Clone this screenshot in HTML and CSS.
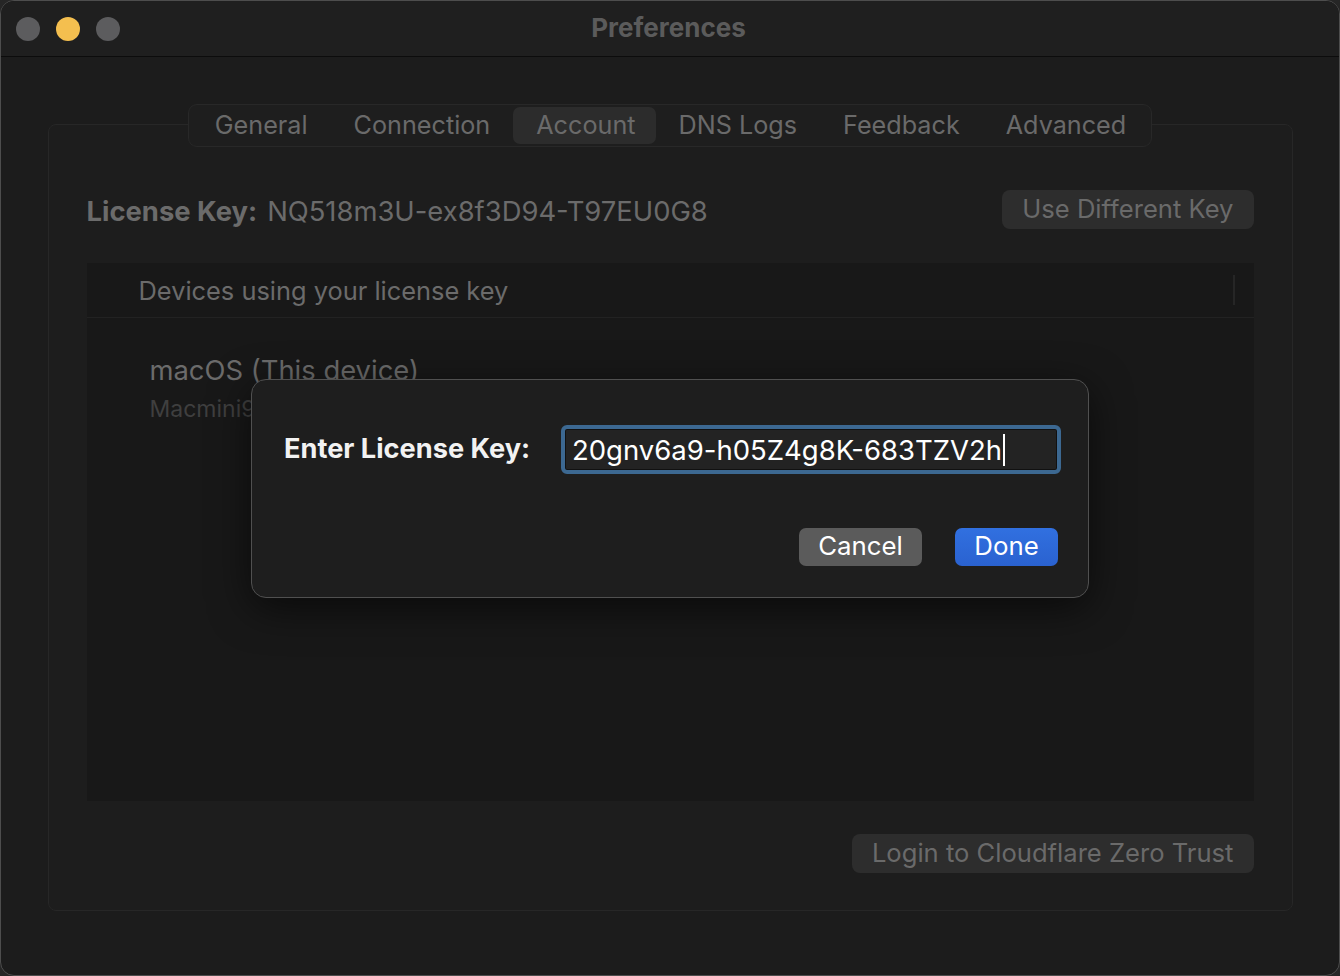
FILE: index.html
```html
<!DOCTYPE html>
<html lang="en">
<head>
<meta charset="utf-8">
<title>Preferences</title>
<link rel="stylesheet" href="styles.css">
</head>
<body>
<div class="window">
  <header class="titlebar">
    <div class="lights">
      <span class="light gray"></span>
      <span class="light yellow"></span>
      <span class="light gray"></span>
    </div>
    <div class="title">Preferences</div>
  </header>
  <main class="content">
    <nav class="tabs">
      <span class="tab">General</span>
      <span class="tab">Connection</span>
      <span class="tab active">Account</span>
      <span class="tab">DNS Logs</span>
      <span class="tab">Feedback</span>
      <span class="tab">Advanced</span>
    </nav>
    <section class="group">
      <div class="key-row">
        <div class="key"><span class="key-label">License Key:</span><span class="key-value">NQ518m3U-ex8f3D94-T97EU0G8</span></div>
        <button class="btn">Use Different Key</button>
      </div>
      <div class="table">
        <div class="table-head">
          <span>Devices using your license key</span>
          <span class="col-div"></span>
        </div>
        <div class="table-row">
          <div class="dev-name">macOS (This device)</div>
          <div class="dev-model">Macmini9,1</div>
        </div>
      </div>
      <div class="bottom-row">
        <button class="btn">Login to Cloudflare Zero Trust</button>
      </div>
    </section>
  </main>
  <div class="sheet">
    <div class="sheet-row">
      <span class="sheet-label">Enter License Key:</span>
      <div class="field"><span class="field-text">20gnv6a9-h05Z4g8K-683TZV2h</span><span class="caret"></span></div>
    </div>
    <div class="sheet-actions">
      <button class="sbtn cancel">Cancel</button>
      <button class="sbtn done">Done</button>
    </div>
  </div>
</div>
</body>
</html>
```
FILE: styles.css
```css
* { box-sizing: border-box; }
html, body { margin: 0; padding: 0; }
body {
  width: 1340px;
  height: 976px;
  background: #262626;
  font-family: "Inter", "Noto Sans", sans-serif;
  overflow: hidden;
}
.window {
  position: relative;
  width: 1340px;
  height: 976px;
  background: #1c1c1c;
  border: 1px solid #4d4d4d;
  border-radius: 14px;
  overflow: hidden;
  display: flex;
  flex-direction: column;
}
.titlebar {
  height: 56px;
  flex: none;
  background: #1f1f1f;
  border-bottom: 1px solid #0c0c0c;
  display: flex;
  align-items: center;
  position: relative;
}
.lights {
  display: flex;
  gap: 16px;
  padding-left: 15px;
}
.light {
  width: 24px;
  height: 24px;
  border-radius: 50%;
  background: #5c5c5e;
}
.light.yellow { background: #f4bf4f; }
.title {
  position: absolute;
  left: 0; right: 0; top: 0; bottom: 0;
  display: flex;
  align-items: center;
  justify-content: center;
  font-weight: 700;
  font-size: 26px;
  color: #5b5b5b;
  padding-bottom: 3px;
  padding-right: 3px;
}
.content {
  flex: 1;
  padding: 47px 47px 0 47px;
  display: flex;
  flex-direction: column;
  align-items: center;
}
.tabs {
  position: relative;
  z-index: 1;
  display: flex;
  height: 43px;
  padding: 2px 2px 2px 3px;
  background: #1e1e1e;
  border: 1px solid #282828;
  border-radius: 9px;
}
.tab {
  padding: 0 23px 2px 23px;
  display: flex;
  align-items: center;
  font-size: 25.2px;
  color: #6a6a6a;
  border-radius: 7px;
}
.tab.active { background: #2c2c2c; padding-right: 20px; }
.group {
  width: 1245px;
  height: 787px;
  margin-top: -23px;
  border: 1px solid #272727;
  border-radius: 8px;
  background: #1d1d1d;
  padding: 65px 38px 0 38px;
  display: flex;
  flex-direction: column;
}
.key-row {
  height: 39px;
  display: flex;
  align-items: center;
  justify-content: space-between;
}
.key { font-size: 27.4px; color: #6b6b6b; padding-top: 2px; }
.key-label { font-weight: 700; margin-right: 10px; }
.btn {
  font-family: inherit;
  font-size: 25.6px;
  color: #6a6a6a;
  background: #2d2d2d;
  border: none;
  border-radius: 8px;
  height: 39px;
  padding: 0 20px 2px 20px;
}
.table {
  margin-top: 34px;
  height: 538px;
  background: #181818;
  display: flex;
  flex-direction: column;
}
.table-head {
  height: 55px;
  border-bottom: 1px solid #222;
  display: flex;
  align-items: center;
  justify-content: space-between;
  padding: 0 19px 0 52px;
  font-size: 25.4px;
  color: #6b6b6b;
}
.col-div { width: 2px; height: 30px; background: #262626; }
.table-row { padding: 36px 0 0 63px; }
.dev-name { font-size: 27.4px; color: #6b6b6b; line-height: 32px; }
.dev-model { font-size: 23px; color: #3f3f3f; line-height: 30px; margin-top: 8px; }
.bottom-row {
  margin-top: 33px;
  display: flex;
  justify-content: flex-end;
}
.sheet {
  position: absolute;
  left: 250px;
  top: 378px;
  width: 838px;
  height: 219px;
  background: #1e1e1e;
  border: 1px solid #505050;
  border-radius: 15px;
  box-shadow: 0 10px 40px rgba(0,0,0,0.6);
  padding: 45px 27px 0 32px;
  display: flex;
  flex-direction: column;
}
.sheet-row {
  display: flex;
  align-items: center;
  justify-content: space-between;
}
.sheet-label { font-weight: 700; font-size: 27.2px; color: #f2f2f2; padding-bottom: 2px; }
.field {
  width: 500px;
  height: 49px;
  border: 4px solid #3c6891;
  border-radius: 6px;
  background: #232323;
  box-shadow: inset 0 0 0 1px #111;
  display: flex;
  align-items: center;
  padding-left: 7px;
}
.field-text { font-size: 27.5px; color: #fff; }
.caret { width: 2px; height: 32px; background: #fff; margin-left: 1px; }
.sheet-actions {
  margin-top: 54px;
  display: flex;
  justify-content: flex-end;
  gap: 33px;
  padding-right: 3px;
}
.sbtn {
  font-family: inherit;
  font-size: 25.8px;
  color: #fff;
  border: none;
  border-radius: 7px;
  height: 38px;
  padding: 0 0 4px 0;
}
.cancel { background: #5b5b5b; width: 123px; }
.done { background: linear-gradient(#3170e0, #2a62d0); width: 103px; }
```
